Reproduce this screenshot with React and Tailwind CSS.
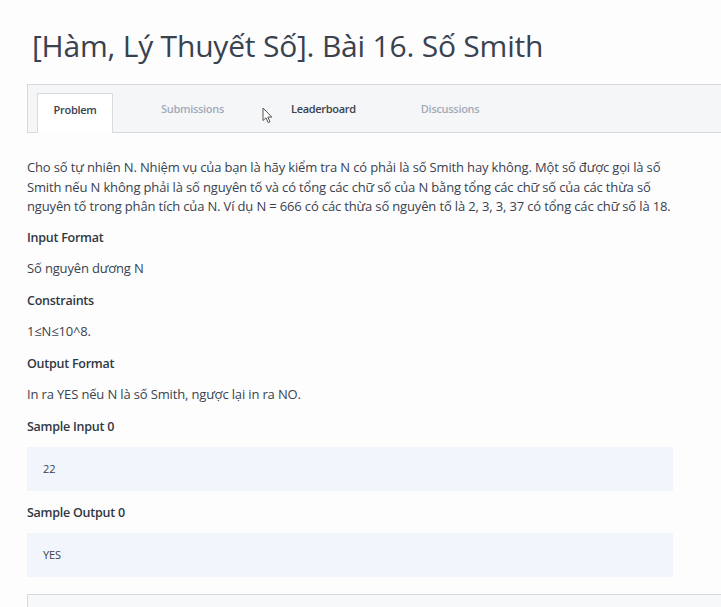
import React from "react";

export default function App() {
  const h = "font-semibold text-[12.5px] tracking-[-0.25px] text-[#2f3843]";
  return (
    <div className="h-[607px] w-[721px] overflow-hidden bg-[#fdfdfe] text-[#39424e]" style={{ fontFamily: '"Open Sans", "Noto Sans", sans-serif' }}>
      <div className="pl-[27px]">
        <h1 className="pt-[25px] pl-[5px] text-[30px] leading-[42px] font-normal text-[#39424e] tracking-[-0.2px]">
          [Hàm, Lý Thuyết Số]. Bài 16. Số Smith
        </h1>
        <div className="relative mt-[17px] h-[49px] border-y border-[#d8dadd] border-l bg-[#f5f6f8] flex items-end pl-[9px]">
          <div className="h-[40px] w-[76px] -mb-px pb-[6px] bg-white border border-b-0 border-[#d8dadd] flex items-center justify-center text-[11px] font-semibold tracking-[-0.3px] text-[#39424e]">
            Problem
          </div>
          <div className="h-[40px] pb-[6px] flex items-center text-[11px] font-semibold tracking-[-0.3px]">
            <span className="ml-[48px] text-[#a3aab7]">Submissions</span>
            <span className="ml-[67px] text-[#39424e]">Leaderboard</span>
            <span className="ml-[65px] text-[#a3aab7]">Discussions</span>
          </div>
          <svg className="absolute left-[234px] top-[22px]" width="11" height="17" viewBox="0 0 11 17">
            <path d="M1 1 L1 13.5 L4 10.8 L6.2 15.6 L8 14.8 L5.9 10.1 L9.8 10.1 Z" fill="#fff" stroke="#555" strokeWidth="1" strokeLinejoin="round" />
          </svg>
        </div>
        <div className="pr-[28px] text-[13px] leading-[19.5px] tracking-[-0.15px]">
          <p className="mt-[25px] text-[#39424e]">
            Cho số tự nhiên N. Nhiệm vụ của bạn là hãy kiểm tra N có phải là số Smith hay không. Một số được gọi là số Smith nếu N không phải là số nguyên tố và có tổng các chữ số của N bằng tổng các chữ số của các thừa số nguyên tố trong phân tích của N. Ví dụ N = 666 có các thừa số nguyên tố là 2, 3, 3, 37 có tổng các chữ số là 18.
          </p>
          <h3 className={"mt-[11px] " + h}>Input Format</h3>
          <p className="mt-[12px]">Số nguyên dương N</p>
          <h3 className={"mt-[12px] " + h}>Constraints</h3>
          <p className="mt-[12px]">1≤N≤10^8.</p>
          <h3 className={"mt-[12px] " + h}>Output Format</h3>
          <p className="mt-[12px]">In ra YES nếu N là số Smith, ngược lại in ra NO.</p>
          <h3 className={"mt-[12px] " + h}>Sample Input 0</h3>
          <div className="mt-[11px] w-[646px] h-[44px] bg-[#f2f6fc] flex items-center pl-[16px] text-[11px]">22</div>
          <h3 className={"mt-[12px] " + h}>Sample Output 0</h3>
          <div className="mt-[10px] w-[646px] h-[44px] bg-[#f2f6fc] flex items-center pl-[16px] text-[11px]">YES</div>
        </div>
        <div className="mt-[17px] h-[30px] border-t border-l border-[#d8dadd] bg-[#f7f8f9]"></div>
      </div>
    </div>
  );
}
